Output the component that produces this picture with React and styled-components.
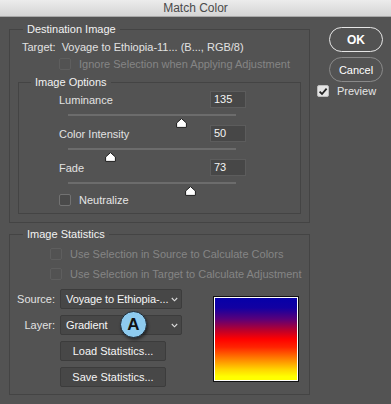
import React from "react";
import styled, { createGlobalStyle } from "styled-components";

// 슬라이더 값과 범위
const sliders = [
  { name: "luminance", text: "Luminance", value: 135, max: 200 },
  { name: "intensity", text: "Color Intensity", value: 50, max: 200 },
  { name: "fade", text: "Fade", value: 73, max: 100 },
];

const GlobalStyle = createGlobalStyle`
  html, body {
    margin: 0;
    padding: 0;
    background: #535353;
  }
  body {
    font-family: "Liberation Sans", Arial, sans-serif;
    font-size: 11px;
    color: #e2e2e2;
  }
`;

const Window = styled.div`
  width: 391px;
  height: 404px;
  overflow: hidden;
  background: #535353;
  display: flex;
  flex-direction: column;
`;

const TitleBar = styled.div`
  height: 16px;
  line-height: 16px;
  flex-shrink: 0;
  text-align: center;
  font-size: 12px;
  color: #4a4a4a;
  background: linear-gradient(#ececec, #d4d4d4);
  border-bottom: 1px solid #a8a8a8;
`;

const Body = styled.div`
  display: flex;
  align-items: flex-start;
  padding: 5px 0 0 9px;
`;

const MainColumn = styled.div`
  width: 301px;
  display: flex;
  flex-direction: column;
  gap: 4px;
`;

// fieldset 으로 그룹 테두리 + 제목
const Group = styled.fieldset`
  margin: ${(p) => (p.$inset ? "4px 8px 0" : "0")};
  padding: 0 0 ${(p) => p.$padBottom}px;
  border: 1px solid #444444;
  min-width: 0;
`;

const Legend = styled.legend`
  margin-left: ${(p) => p.$offset}px;
  padding: 0 4px;
  line-height: 14px;
  font-size: 11px;
  color: #f2f2f2;
`;

const TargetRow = styled.div`
  display: flex;
  gap: 6px;
  height: 14px;
  line-height: 14px;
  padding: 4px 0 0 12px;
`;

const CheckRow = styled.label`
  display: flex;
  align-items: center;
  gap: 8px;
  height: ${(p) => p.$height || 14}px;
  margin-top: ${(p) => p.$top || 0}px;
  padding-left: ${(p) => p.$indent}px;
  color: ${(p) => (p.$disabled ? "#858585" : "#e6e6e6")};
`;

const Box = styled.span`
  width: 12px;
  height: 12px;
  box-sizing: border-box;
  border-radius: 2px;
  flex-shrink: 0;
  display: flex;
  align-items: center;
  justify-content: center;
  border: 1px solid ${(p) => (p.$checked ? "#bdbdbd" : p.$disabled ? "#5e5e5e" : "#727272")};
  background: ${(p) => (p.$checked ? "#e4e4e4" : p.$disabled ? "#525252" : "#4a4a4a")};
`;

const Options = styled.div`
  padding: 2px 54px 0 40px;
`;

const SliderBlock = styled.div`
  height: 34px;
  display: flex;
  flex-direction: column;
`;

const SliderTop = styled.div`
  display: flex;
  align-items: center;
  justify-content: space-between;
  height: 17px;
`;

const ValueBox = styled.div`
  width: 36px;
  height: 17px;
  box-sizing: border-box;
  padding-left: 3px;
  line-height: 15px;
  font-size: 11px;
  color: #f4f4f4;
  background: #474747;
  border: 1px solid #5c5c5c;
`;

const Track = styled.div`
  position: relative;
  margin: 6px 0 0 9px;
  width: 168px;
  height: 2px;
  background: #6c6c6c;
`;

const Thumb = styled.svg`
  position: absolute;
  top: 4px;
  margin-left: -5.5px;
`;

const Statistics = styled.div`
  padding: 6px 0 0 40px;
  display: flex;
  flex-direction: column;
  gap: 6px;
`;

const StatsBottom = styled.div`
  display: flex;
  align-items: flex-start;
  margin-top: 8px;
`;

const FormGrid = styled.div`
  display: grid;
  grid-template-columns: 45px 122px;
  column-gap: 5px;
  row-gap: 6px;
  align-items: center;
`;

const FieldLabel = styled.span`
  text-align: right;
  color: #e2e2e2;
`;

const Select = styled.div`
  position: relative;
  height: 20px;
  box-sizing: border-box;
  display: flex;
  align-items: center;
  justify-content: space-between;
  padding: 0 3px 0 5px;
  color: #f6f6f6;
  background: #474747;
  border: 1px solid #3c3c3c;
  border-radius: 2px;
  white-space: nowrap;
`;

const SelectText = styled.span`
  white-space: nowrap;
  letter-spacing: -0.1px;
`;

const PushButton = styled.div`
  grid-column: 2;
  width: 106px;
  height: 20px;
  box-sizing: border-box;
  line-height: 18px;
  text-align: center;
  color: #f6f6f6;
  background: #474747;
  border: 1px solid #3c3c3c;
  border-radius: 2px;
`;

// 드롭다운 위에 겹치는 원형 라벨
const Badge = styled.div`
  position: absolute;
  left: 59px;
  top: -5px;
  width: 27px;
  height: 27px;
  box-sizing: border-box;
  border-radius: 50%;
  border: 1.5px solid #1d2833;
  background: #8ecbef;
  box-shadow: 1px 2px 3px rgba(0, 0, 0, 0.45);
  display: flex;
  align-items: center;
  justify-content: center;
  font-weight: bold;
  font-size: 17px;
  color: #111;
`;

const Preview = styled.div`
  margin: 7px 0 0 31px;
  width: 86px;
  height: 86px;
  box-sizing: border-box;
  border: 1px solid #111;
  padding: 1px;
  background: #ffffff;
`;

const Swatch = styled.div`
  width: 100%;
  height: 100%;
  background: linear-gradient(
    to bottom,
    #0600a8 0%,
    #1200a2 12%,
    #5c0078 26%,
    #b8002e 39%,
    #ff0000 50%,
    #ff2400 60%,
    #ff8000 74%,
    #ffd400 87%,
    #ffff00 96%
  );
`;

const SideColumn = styled.div`
  margin-left: 7px;
  padding-top: 5px;
  display: flex;
  flex-direction: column;
`;

const PillButton = styled.div`
  margin-left: 12px;
  margin-bottom: 5px;
  width: 54px;
  height: 25px;
  box-sizing: border-box;
  border-radius: 13px;
  border: 1px solid ${(p) => (p.$primary ? "#e6e6e6" : "#8a8a8a")};
  display: flex;
  align-items: center;
  justify-content: center;
  font-size: ${(p) => (p.$primary ? 12 : 11)}px;
  font-weight: ${(p) => (p.$primary ? "bold" : "normal")};
  color: #ffffff;
`;

const Chevron = () => (
  <svg width="7" height="5" viewBox="0 0 7 5" style={{ flexShrink: 0 }}>
    <path d="M0.8 1 L3.5 3.8 L6.2 1" fill="none" stroke="#dddddd" strokeWidth="1.1" />
  </svg>
);

const Check = () => (
  <svg width="10" height="9" viewBox="0 0 10 9">
    <path d="M1.6 4.6 L4 7 L8.6 1.6" fill="none" stroke="#222" strokeWidth="1.8" />
  </svg>
);

const Slider = ({ text, value, max }) => (
  <SliderBlock>
    <SliderTop>
      <span>{text}</span>
      <ValueBox>{value}</ValueBox>
    </SliderTop>
    <Track>
      <Thumb width="11" height="10" viewBox="0 0 11 10" style={{ left: `${(value / max) * 100}%` }}>
        <path d="M5.5 0.6 L10.4 5 L10.4 9.4 L0.6 9.4 L0.6 5 Z" fill="#ffffff" stroke="#1e1e1e" strokeWidth="1" strokeLinejoin="round" />
      </Thumb>
    </Track>
  </SliderBlock>
);

const App = () => {
  return (
    <Window>
      <GlobalStyle />
      <TitleBar>Match Color</TitleBar>
      <Body>
        <MainColumn>
          <Group $padBottom={8}>
            <Legend $offset={13}>Destination Image</Legend>
            <TargetRow>
              <span>Target:</span>
              <span>Voyage to Ethiopia-11... (B..., RGB/8)</span>
            </TargetRow>
            <CheckRow $indent={49} $top={3} $disabled>
              <Box $disabled />
              Ignore Selection when Applying Adjustment
            </CheckRow>
            <Group $inset $padBottom={7}>
              <Legend $offset={12}>Image Options</Legend>
              <Options>
                {sliders.map((s) => (
                  <Slider key={s.name} text={s.text} value={s.value} max={s.max} />
                ))}
              </Options>
              <CheckRow $indent={40} $top={1} $height={12}>
                <Box />
                Neutralize
              </CheckRow>
            </Group>
          </Group>

          <Group $padBottom={7}>
            <Legend $offset={13}>Image Statistics</Legend>
            <Statistics>
              <CheckRow $indent={0} $disabled>
                <Box $disabled />
                Use Selection in Source to Calculate Colors
              </CheckRow>
              <CheckRow $indent={0} $disabled>
                <Box $disabled />
                Use Selection in Target to Calculate Adjustment
              </CheckRow>
            </Statistics>
            <StatsBottom>
              <FormGrid>
                <FieldLabel>Source:</FieldLabel>
                <Select>
                  <SelectText>Voyage to Ethiopia-...</SelectText>
                  <Chevron />
                </Select>
                <FieldLabel>Layer:</FieldLabel>
                <Select>
                  <SelectText>Gradient</SelectText>
                  <Chevron />
                  <Badge>A</Badge>
                </Select>
                <PushButton>Load Statistics...</PushButton>
                <PushButton>Save Statistics...</PushButton>
              </FormGrid>
              <Preview>
                <Swatch />
              </Preview>
            </StatsBottom>
          </Group>
        </MainColumn>

        <SideColumn>
          <PillButton $primary>OK</PillButton>
          <PillButton>Cancel</PillButton>
          <CheckRow $indent={0} $top={-2} $height={12}>
            <Box $checked>
              <Check />
            </Box>
            Preview
          </CheckRow>
        </SideColumn>
      </Body>
    </Window>
  );
};

export default App;
